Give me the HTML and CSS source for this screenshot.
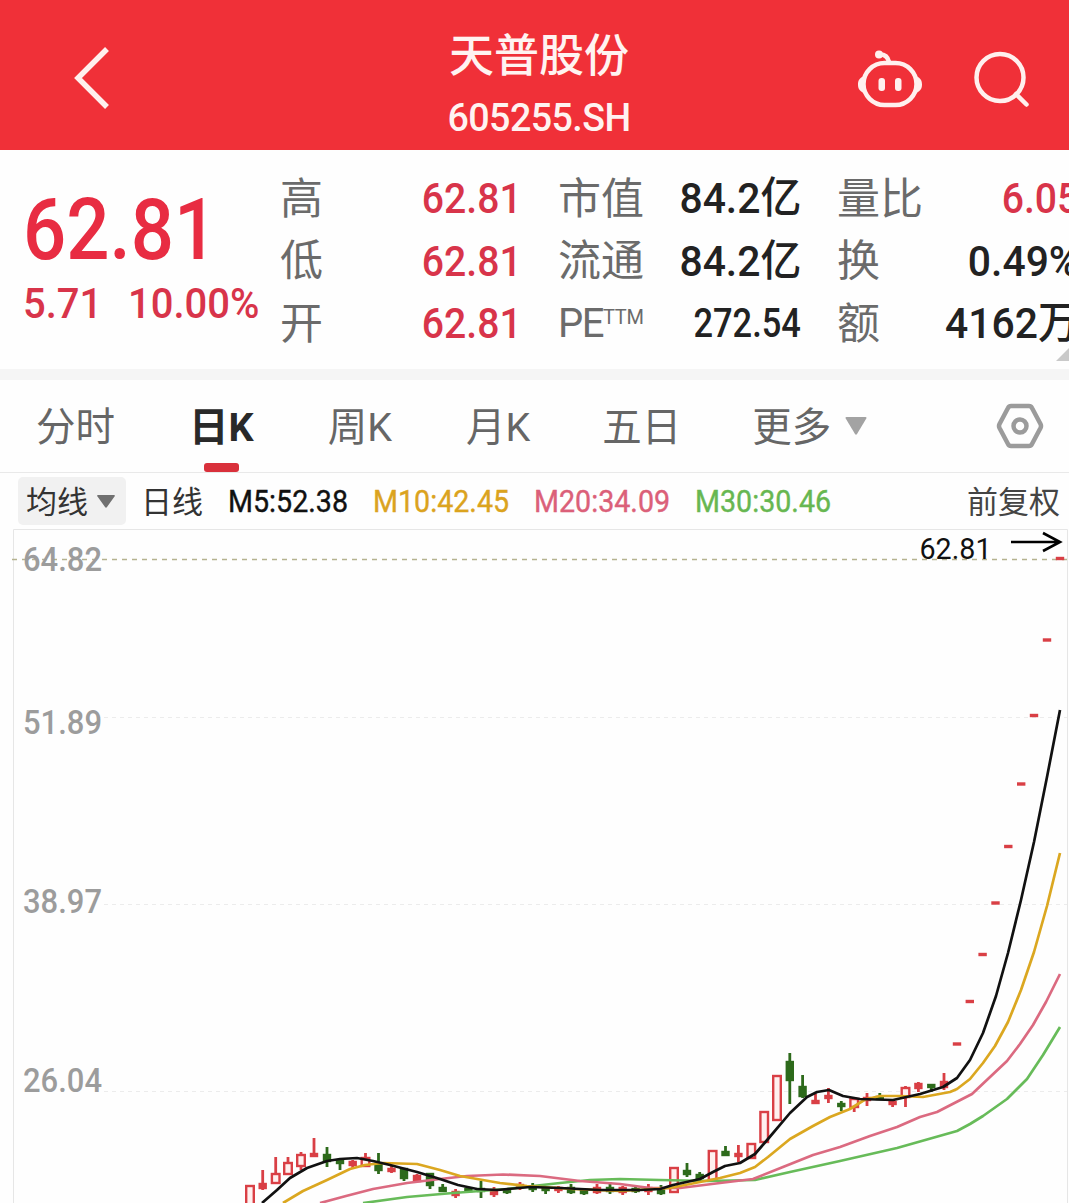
FILE: index.html
```html
<!DOCTYPE html>
<html lang="zh-CN">
<head>
<meta charset="utf-8">
<title>天普股份 605255.SH</title>
<link rel="stylesheet" href="styles.css">
</head>
<body>
<header class="topbar">
  <svg class="back" viewBox="0 0 40 64" width="40" height="64"><path d="M36 3 7 32 36 61"/></svg>
  <div class="title">
    <h1>天普股份</h1>
    <p>605255.SH</p>
  </div>
  <div class="actions">
    <svg viewBox="0 0 66 60" width="66" height="60">
      <rect x="5.500" y="13" width="53" height="42" rx="21"/>
      <path d="M31 12C30 7 27 4.500 22 4.500"/>
      <circle class="solid" cx="21" cy="4.500" r="4"/>
      <path class="solid" d="M6 26C1 28 0 31 0 34.500S1 41 6 43ZM58 26C63 28 64 31 64 34.500S63 41 58 43Z"/>
      <rect class="solid" x="20.500" y="28" width="6.500" height="13" rx="3"/>
      <rect class="solid" x="37" y="28" width="6.500" height="13" rx="3"/>
    </svg>
    <svg viewBox="0 0 58 58" width="58" height="58"><circle cx="27" cy="27.500" r="23.500"/><path d="M43 44 53.500 54.500"/></svg>
  </div>
</header>

<section class="quote">
  <div class="price">
    <div class="last"><span>62.81</span></div>
    <div class="change"><span>5.71</span><span>10.00%</span></div>
  </div>
  <dl class="stats">
    <div><dt>高</dt><dd class="up">62.81</dd></div>
    <div><dt>市值</dt><dd>84.2亿</dd></div>
    <div><dt>量比</dt><dd class="up">6.05</dd></div>
    <div><dt>低</dt><dd class="up">62.81</dd></div>
    <div><dt>流通</dt><dd>84.2亿</dd></div>
    <div><dt>换</dt><dd>0.49%</dd></div>
    <div><dt>开</dt><dd class="up">62.81</dd></div>
    <div><dt class="latin">PE<sup>TTM</sup></dt><dd class="small">272.54</dd></div>
    <div><dt>额</dt><dd>4162万</dd></div>
  </dl>
  <i class="corner"></i>
</section>

<nav class="tabs">
  <a>分时</a><a class="active">日K</a><a>周K</a><a>月K</a><a>五日</a><a>更多</a>
  <svg class="caret" viewBox="0 0 22 18" width="22" height="18"><path d="M1.500 0H20.500Q22 0 21.300 1.500L12 17Q11 18.500 10 17L.7 1.500Q0 0 1.500 0Z"/></svg>
  <svg class="gear" viewBox="0 0 48 48" width="48" height="48"><path d="M15 4H33Q35 4 36 6L44.500 22Q45.500 24 44.500 26L36 42Q35 44 33 44H15Q13 44 12 42L3.500 26Q2.500 24 3.500 22L12 6Q13 4 15 4Z"/><circle cx="24" cy="24" r="6.500"/></svg>
</nav>

<div class="averages">
  <button class="picker"><span>均线</span><svg viewBox="0 0 18 13" width="18" height="13"><path d="M1 0H17Q18.500 .2 17.500 1.500L10 12Q9 13.500 8 12L.5 1.500Q-.5 .2 1 0Z"/></svg></button>
  <span class="period">日线</span>
  <span class="ma m5">M5:52.38</span>
  <span class="ma m10">M10:42.45</span>
  <span class="ma m20">M20:34.09</span>
  <span class="ma m30">M30:30.46</span>
  <span class="adjust">前复权</span>
</div>

<svg class="chart" viewBox="0 529 1069 674" width="1069" height="674">
  <path class="frame" d="M13.500 1203V529.500H1067.500V1203"/>
  <g class="grid"><path d="M104 717.500H1067M104 904.500H1067M104 1091.500H1067"/></g>
  <path class="limit" d="M12 559.500H1067"/>
  <g class="axis">
    <text x="23" y="571" textLength="79" lengthAdjust="spacingAndGlyphs">64.82</text>
    <text x="23" y="734" textLength="79" lengthAdjust="spacingAndGlyphs">51.89</text>
    <text x="23" y="913" textLength="79" lengthAdjust="spacingAndGlyphs">38.97</text>
    <text x="23" y="1092" textLength="79" lengthAdjust="spacingAndGlyphs">26.04</text>
  </g>
  <g id="candles"></g>
  <path class="line m30" d="M363 1203 407 1197 453 1193 507 1189 560 1183 590 1180 620 1179 660 1180 707 1181 755 1180 790 1172 840 1161 897 1148 957 1131 970 1124 983 1116 1007 1099 1027 1079 1043 1055 1060 1027"/>
  <path class="line m20" d="M320 1203 346 1196 373 1189 407 1183 440 1179 467 1176 503 1174.500 540 1176 580 1181 620 1184 650 1188 680 1188 720 1183 753 1179 783 1167 813 1155 840 1147 870 1136 897 1127 920 1117 937 1112 972 1094 1007 1061 1020 1044 1033 1025 1046 1002 1060 974"/>
  <path class="line m10" d="M283 1203 303 1191 327 1180 350 1169 365 1165 383 1163 417 1164 440 1170 460 1176 500 1183 527 1186 573 1189 620 1191 670 1188 720 1178 740 1173 755 1167 768 1157 790 1139 813 1126 830 1117 850 1109 865 1099.500 880 1096 900 1096 923 1097 950 1092 957 1089 970 1079 983 1063 995 1046 1008 1022 1021 990 1034 952 1047 906 1060 853"/>
  <path class="line m5" d="M262 1203 277 1190 290 1178 307 1168 327 1161 340 1159 357 1158 373 1161 390 1165 417 1172 440 1179 458 1185 477 1189 497 1190 530 1187 560 1188 600 1190 640 1190 660 1189 673 1185 700 1179 713 1172 725 1166 740 1163 755 1154 768 1139 790 1113 807 1097 817 1092 829 1090 843 1096 860 1099 893 1100 920 1094 943 1087 957 1078 970 1060 983 1033 996 996 1008 953 1021 900 1034 842 1047 777 1060 710"/>
  <text class="peak" x="919.500" y="558.500" textLength="72" lengthAdjust="spacingAndGlyphs">62.81</text>
  <path class="arrow" d="M1011 542H1060M1043 533 1060 542 1043 551"/>
</svg>
<script src="chart.js"></script>
</body>
</html>
```
FILE: styles.css
```css
* { box-sizing: border-box; }
body { margin: 0; width: 1069px; height: 1203px; overflow: hidden; background: #fefefe; color: #222; font-family: Roboto, "Noto Sans CJK SC", sans-serif; }
svg { display: block; flex: none; }

.topbar { height: 150px; background: #f03038; color: #fff3f1; display: grid; grid-template-columns: 300px 478px 291px; }
.topbar svg { fill: none; stroke: #fff0ee; stroke-width: 4.5; stroke-linecap: round; }
.topbar svg .solid { fill: #fff0ee; stroke: none; }
.back { margin: 46px 0 0 71px; }
.topbar .back { stroke-width: 5.5; stroke-linecap: butt; stroke-linejoin: miter; }
.title { text-align: center; padding-top: 27px; }
.title h1 { margin: 0; font-size: 45px; line-height: 60px; font-weight: 500; }
.title p { margin: 8px 0 0; font-size: 39px; line-height: 46px; letter-spacing: -.6px; transform: scaleX(.965); font-weight: 500; }
.actions { display: flex; align-items: flex-start; padding: 50px 0 0 80px; gap: 49px; }

.quote { position: relative; height: 219px; display: flex; overflow: hidden; }
.price { width: 280px; flex: none; padding: 30px 0 0 23px; color: #e82c42; font-weight: 500; }
.last { font-size: 86px; line-height: 100px; }
.last span { display: inline-block; transform: scaleX(.885); transform-origin: left; }
.change { display: flex; gap: 20px; margin-top: -2px; font-size: 43px; line-height: 50px; color: #d8344a; }
.change span { display: inline-block; transform: scaleX(.93); transform-origin: left; }
.stats { margin: 0; padding-top: 16px; display: grid; grid-template-columns: 242px 243px 242px; grid-auto-rows: 62.500px; column-gap: 36px; flex: none; }
.stats div { display: flex; justify-content: space-between; align-items: center; line-height: 62px; }
.stats dt { padding-top: 3px; font-size: 43px; font-weight: 400; color: #6b6b6b; }
.stats dd { margin: 2px 0 0; font-size: 43px; font-weight: 500; transform: scaleX(.95); transform-origin: right; white-space: nowrap; }
.stats .up { color: #d8344a; transform: scaleX(.91); }
.stats .small { font-size: 41px; transform: scaleX(.84); }
.stats .latin { font-size: 40px; letter-spacing: -1.5px; }
.stats sup { font-size: 20px; line-height: 0; vertical-align: 13px; letter-spacing: -.3px; }
.corner { position: absolute; left: 1056px; top: 197px; border-left: 14px solid transparent; border-bottom: 14px solid #c9c9c9; }

.tabs { height: 104px; border-top: 11px solid #f5f5f5; border-bottom: 1px solid #e9e9e9; display: flex; align-items: center; padding-left: 36px; gap: 74px; font-size: 39.500px; color: #666; white-space: nowrap; }
.tabs a { display: flex; justify-content: center; position: relative; padding-top: 4px; line-height: 88px; }
.tabs a:nth-child(5) { margin-left: -2px; }
.tabs a:nth-child(6) { margin-left: -3px; }
.tabs .active { color: #292929; font-weight: 700; }
.tabs .active::after { content: ""; position: absolute; bottom: 0; width: 35px; height: 9px; border-radius: 3px; background: #d9303b; }
.caret { fill: #a3a3a3; margin-left: -60px; }
.gear { fill: none; stroke: #9b9b9b; stroke-width: 4.5; margin-left: 55px; }

.averages { height: 56px; display: grid; grid-template-columns: 123px 87px 145px 161px 161px auto 102px; padding-left: 18px; align-items: center; font-size: 31px; white-space: nowrap; }
.picker { width: 108px; height: 48px; border: 0; border-radius: 5px; padding: 0 0 0 8px; background: #f1f1f1; font: inherit; color: #333; display: flex; align-items: center; gap: 9px; }
.picker span, .period, .adjust { padding-bottom: 4px; }
.picker svg { fill: #707070; }
.period { color: #333; }
.adjust { color: #444; }
.ma { font-size: 32px; font-weight: 400; transform: scaleX(.895); transform-origin: left; -webkit-text-stroke: .4px; }
.ma.m5 { color: #111; }
.ma.m10 { color: #dba31e; }
.ma.m20 { color: #db6079; }
.ma.m30 { color: #67b751; }

.chart text { font-family: Roboto, sans-serif; }
.frame { fill: none; stroke: #e6e6e6; }
.grid { stroke: #ececec; stroke-dasharray: 4 4; }
.limit { stroke: #b5b28f; stroke-width: 1.3; stroke-dasharray: 5 5; }
.axis { font-size: 34px; font-weight: 500; fill: #9c9c9c; }
.peak { font-size: 30px; fill: #111; }
.arrow { fill: none; stroke: #000; stroke-width: 2.6; }
.line { fill: none; stroke-width: 2.7; stroke-linejoin: round; }
.line.m5 { stroke: #111; }
.line.m10 { stroke: #dba720; }
.line.m20 { stroke: #db6a80; }
.line.m30 { stroke: #67bb59; }
.rise { stroke: #d93f45; fill: #d93f45; }
.rise.hollow { fill: #fff0ef; }
.fall { stroke: #2d6a1b; fill: #2d6a1b; }
.wick { stroke-width: 2.8; }
.body { stroke-width: 2.4; }
```
FILE: chart.js
```js
// Each candle: x, wick top, wick bottom, body top, body bottom, kind
// r = rising, filled; h = rising, hollow; g = falling
const candles = [
  [250, 1186, 1210, 1186, 1210, 'h'], [262.7, 1170, 1190, 1184, 1188, 'r'], [275.7, 1157, 1183, 1174, 1183, 'h'],
  [288, 1157, 1175, 1163, 1174, 'h'], [301, 1152, 1170, 1155, 1166, 'h'], [314, 1138, 1157, 1154, 1156, 'r'],
  [327, 1147, 1167, 1155, 1161, 'g'], [340, 1160, 1170, 1161, 1163, 'g'], [352.7, 1160, 1169, 1162, 1165, 'r'],
  [365.5, 1153, 1166, 1158, 1166, 'h'], [378.5, 1153, 1174, 1164, 1170, 'g'], [391.5, 1166, 1173, 1169, 1171, 'r'],
  [404, 1168, 1181, 1169, 1178, 'g'], [417, 1174, 1182, 1176, 1181, 'r'], [430, 1173, 1189, 1174, 1185, 'g'],
  [442.7, 1184, 1192, 1188, 1191, 'g'], [455.6, 1189, 1198, 1192, 1195, 'r'], [468.4, 1187, 1193, 1189, 1191, 'g'],
  [481, 1181, 1198, 1189, 1191, 'g'], [494, 1187, 1197, 1190, 1194, 'r'], [507, 1188, 1194, 1190, 1192, 'g'],
  [520, 1182, 1190, 1185, 1187, 'r'], [532.7, 1183, 1192, 1187, 1189, 'g'], [545.6, 1187, 1194, 1188, 1190, 'g'],
  [558.4, 1186, 1193, 1188, 1190, 'r'], [571, 1184, 1194, 1188, 1192, 'g'], [584, 1188, 1195, 1190, 1193, 'g'],
  [597, 1184, 1194, 1188, 1192, 'r'], [610, 1182, 1194, 1188, 1191, 'g'], [622.7, 1186, 1195, 1188, 1192, 'r'],
  [635.6, 1187, 1193, 1189, 1191, 'g'], [648.4, 1184, 1195, 1188, 1191, 'r'], [661, 1185, 1195, 1189, 1193, 'g'],
  [674, 1168, 1193, 1168, 1192, 'h'], [687, 1163, 1177, 1171, 1174, 'g'], [699.7, 1172, 1181, 1175, 1178, 'g'],
  [712.6, 1151, 1180, 1151, 1180, 'h'], [725.5, 1146, 1156, 1152, 1155, 'g'], [738.4, 1145, 1162, 1154, 1156, 'r'],
  [751.3, 1144, 1158, 1144, 1158, 'h'], [764.2, 1112, 1142, 1112, 1142, 'h'], [777, 1076, 1120, 1076, 1120, 'h'],
  [789.8, 1053, 1104, 1062, 1080, 'g'], [802.6, 1075, 1098, 1087, 1096, 'g'], [815.5, 1094, 1104, 1101, 1103, 'r'],
  [828.4, 1088, 1103, 1096, 1098, 'r'], [841.3, 1101, 1111, 1104, 1106, 'g'], [854.2, 1098, 1112, 1099, 1107, 'h'],
  [867, 1093, 1106, 1098, 1100, 'r'], [879.8, 1093, 1100, 1097, 1099, 'g'], [892.6, 1099, 1107, 1102, 1104, 'r'],
  [905.5, 1086, 1107, 1088, 1097, 'h'], [918.4, 1082, 1092, 1084, 1088, 'r'], [931.3, 1084, 1092, 1085, 1087, 'g'],
  [944, 1073, 1090, 1082, 1087, 'r'],
  // one-price limit-up sessions
  [957, 1044, 1044, 1043.5, 1044.5, 'r'], [969.8, 1002, 1002, 1001, 1002, 'r'], [982.6, 954, 954, 954, 955, 'r'],
  [995.5, 903, 903, 902.5, 903.5, 'r'], [1008.3, 847, 847, 846, 847, 'r'], [1021.2, 784, 784, 783.5, 784.5, 'r'],
  [1034, 716, 716, 715, 716, 'r'], [1047, 640, 640, 639.5, 640.5, 'r'], [1060, 559, 559, 558, 559, 'r']
];
const layer = document.getElementById('candles');
const add = (name, attrs) => {
  const el = document.createElementNS('http://www.w3.org/2000/svg', name);
  for (const key in attrs) el.setAttribute(key, attrs[key]);
  layer.appendChild(el);
};
for (const [x, hi, lo, top, bottom, kind] of candles) {
  const tone = kind === 'g' ? 'fall' : kind === 'h' ? 'rise hollow' : 'rise';
  add('path', { class: 'wick ' + tone, d: `M${x} ${hi}V${lo}` });
  const w = kind === 'h' ? 7.6 : 6;
  add('rect', { class: 'body ' + tone, x: x - w / 2, y: top, width: w, height: bottom - top });
}
```
